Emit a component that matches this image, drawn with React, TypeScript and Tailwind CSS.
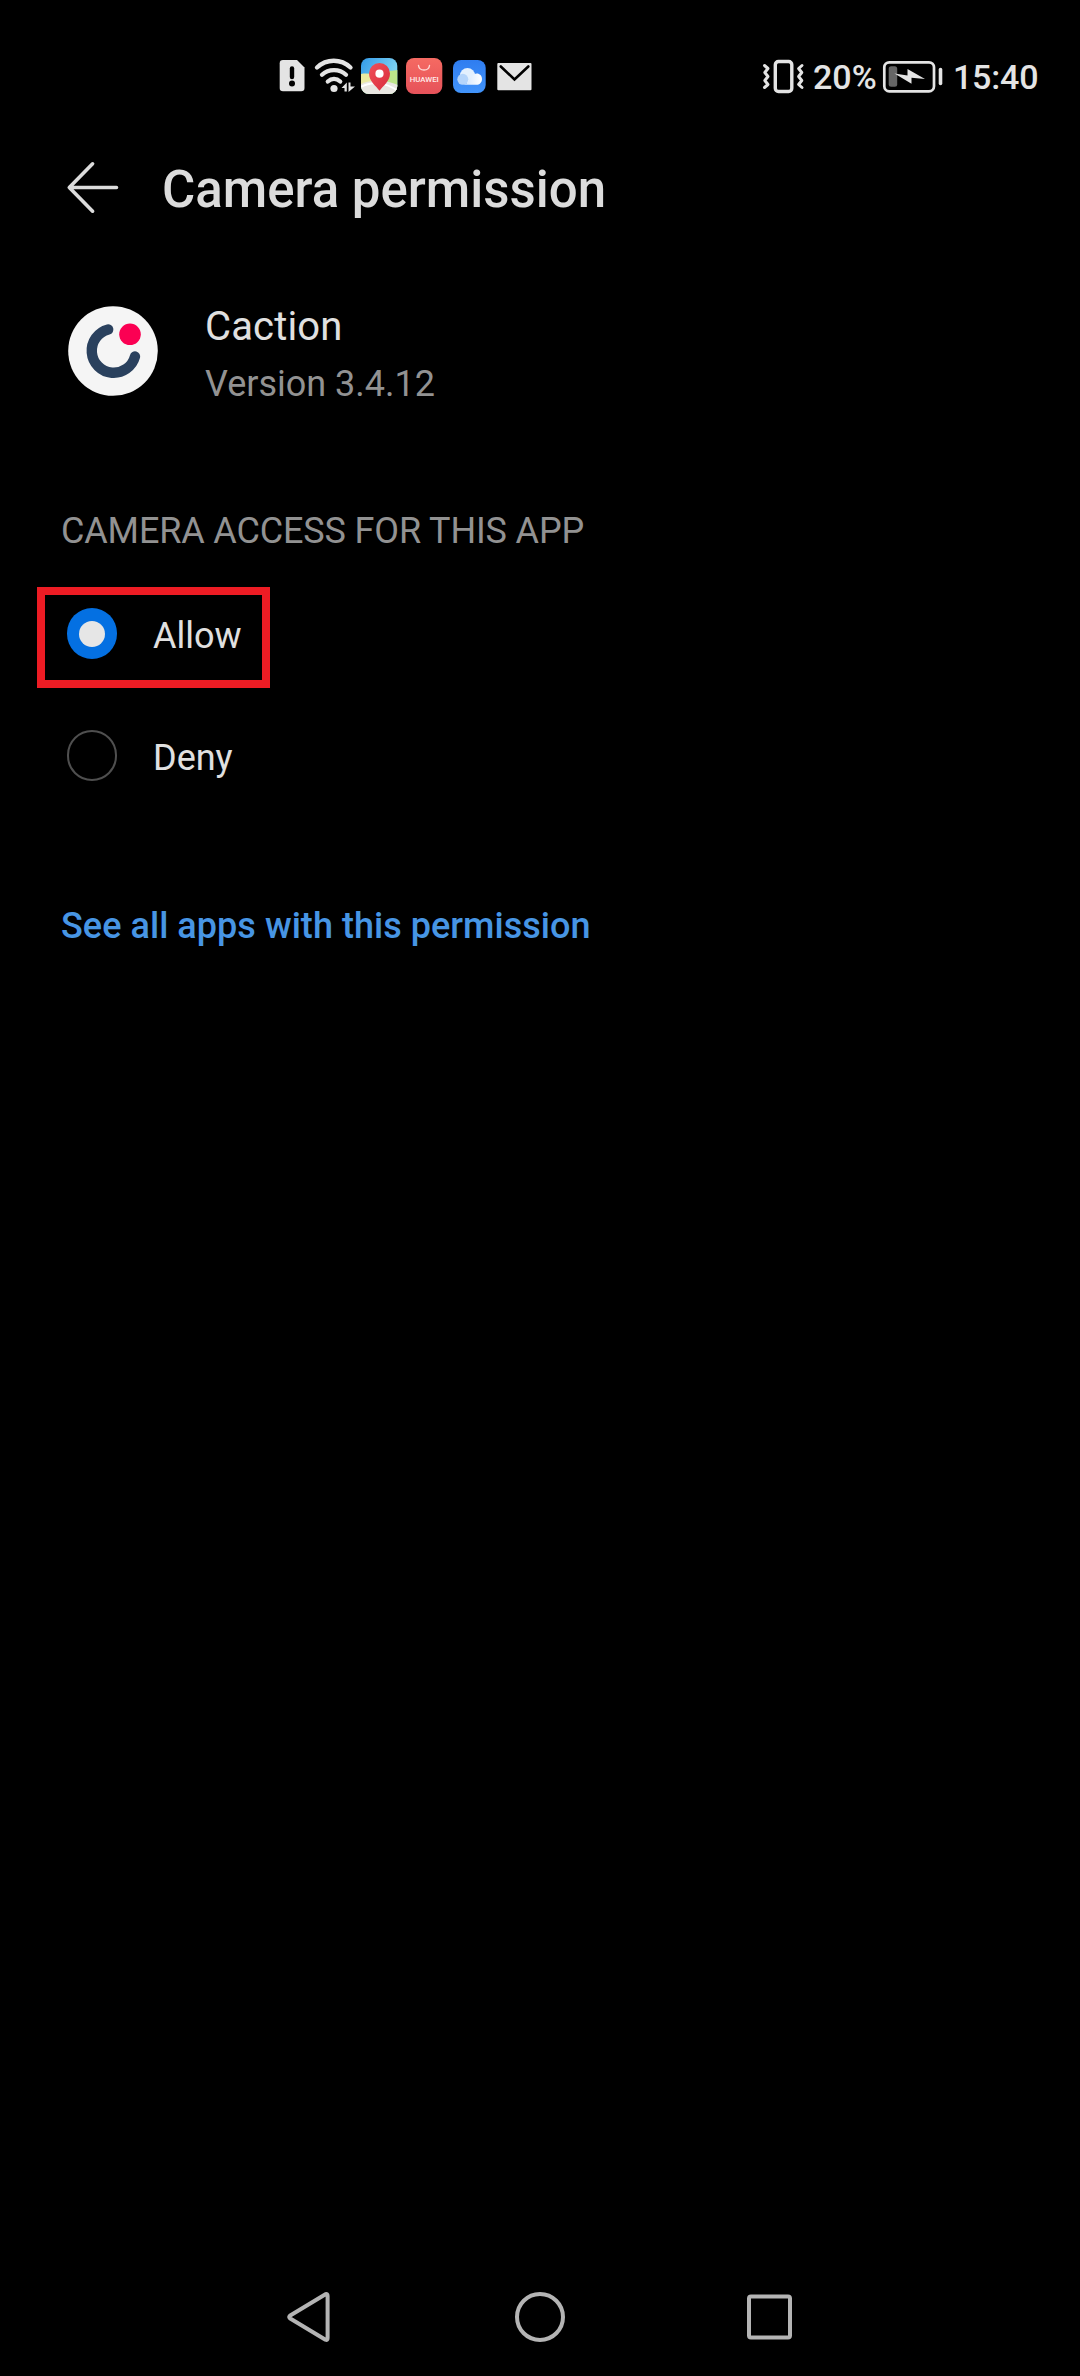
import type { ReactNode } from "react";

const LIGHT = "#e4e4e4";

function SimAlertIcon() {
  return (
    <svg className="ml-[279px] h-[55px] w-[27px]" viewBox="279 50 27 55">
      <path d="M283 60H297L304.500 67.500V88Q304.500 91.300 301.200 91.300H283Q279.700 91.300 279.700 88V63.300Q279.700 60 283 60Z" fill={LIGHT} />
      <path d="M292 68.500V77" stroke="#000" strokeWidth="4.400" strokeLinecap="round" />
      <circle cx="292" cy="83.500" r="3" fill="#000" />
    </svg>
  );
}

function WifiIcon() {
  return (
    <svg className="ml-[6px] h-[55px] w-[46px]" viewBox="312 50 46 55">
      <g fill="none" stroke={LIGHT} strokeWidth="4.300" strokeLinecap="round">
        <path d="M317 67.500C326.500 58.500 341 58.500 350.500 67.500" />
        <path d="M322 74.700C328.500 68.500 339.500 68.500 346 74.700" />
        <path d="M327.800 81.500C331.500 78.200 336.500 78.200 340.200 81.500" />
      </g>
      <circle cx="334" cy="88.500" r="3.600" fill={LIGHT} />
      <path d="M341.500 88L346.800 82.500V91.500H344.500V88Z M348.500 82.500H350.500V86.500H355L348.500 92Z" fill={LIGHT} />
    </svg>
  );
}

function MapIcon() {
  return (
    <svg className="ml-[3px] h-[55px] w-[37px]" viewBox="361 50 37 55">
      <defs>
        <clipPath id="mapClip">
          <rect x="361" y="58" width="36.300" height="36" rx="8" />
        </clipPath>
        <linearGradient id="mapSky" x1="0" y1="0" x2="1" y2="0.600">
          <stop offset="0" stopColor="#329bea" />
          <stop offset="1" stopColor="#8ddcf2" />
        </linearGradient>
        <linearGradient id="mapPin" x1="0" y1="0" x2="1" y2="1">
          <stop offset="0" stopColor="#f0505a" />
          <stop offset="1" stopColor="#d92c3c" />
        </linearGradient>
      </defs>
      <g clipPath="url(#mapClip)">
        <rect x="361" y="58" width="37" height="37" fill="url(#mapSky)" />
        <path d="M361 75C369 73 382 72 398 70V95H361Z" fill="#bde58a" />
        <path d="M361 74C367 73 371 74 375 76V84H361Z" fill="#e9e9a0" />
        <path d="M361 84C371 79 387 80 398 85V95H361Z" fill="#e9e7e2" />
        <path d="M361 87C371 81 385 82 398 91" fill="none" stroke="#fff" strokeWidth="2" />
      </g>
      <path d="M379.500 90.700C376 86 369 81 369 73.500A10.500 10.500 0 0 1 390 73.500C390 81 383 86 379.500 90.700Z" fill="url(#mapPin)" />
      <circle cx="379.500" cy="73.700" r="4.100" fill="#fff" />
    </svg>
  );
}

function AppStoreIcon() {
  return (
    <svg className="ml-[8px] h-[55px] w-[37px]" viewBox="406 50 37 55">
      <defs>
        <linearGradient id="store" x1="0" y1="0" x2="0" y2="1">
          <stop offset="0" stopColor="#f56a62" />
          <stop offset="1" stopColor="#e6525a" />
        </linearGradient>
      </defs>
      <rect x="406" y="58" width="36.300" height="36" rx="8" fill="url(#store)" />
      <path d="M418.500 65.500C419.200 71.500 428.800 71.500 429.500 65.500" fill="none" stroke="#ffd8d4" strokeWidth="1.400" strokeLinecap="round" />
      <text x="409.800" y="81.800" fontSize="6.500" fontWeight="500" fill="#ffeceb" fontFamily="Roboto, sans-serif" textLength="29" lengthAdjust="spacingAndGlyphs">HUAWEI</text>
    </svg>
  );
}

function CloudIcon() {
  return (
    <svg className="ml-[10px] h-[55px] w-[33px]" viewBox="453 50 33 55">
      <defs>
        <linearGradient id="cloudBg" x1="0" y1="0" x2="0" y2="1">
          <stop offset="0" stopColor="#2f7df0" />
          <stop offset="1" stopColor="#4294fb" />
        </linearGradient>
        <linearGradient id="cloudFront" x1="0" y1="0" x2="1" y2="0">
          <stop offset="0" stopColor="#cfe4fd" />
          <stop offset="1" stopColor="#fff" />
        </linearGradient>
      </defs>
      <rect x="453" y="60" width="32.700" height="33" rx="8" fill="url(#cloudBg)" />
      <circle cx="467.500" cy="75.500" r="7.600" fill="#e3f0fe" />
      <circle cx="462.800" cy="79.300" r="5.500" fill="#b5d5fb" />
      <path d="M463.500 84.800C468 84 469 80 471.500 76.500C476 71 482 74 482 79C482 82.500 479.500 84.800 476.500 84.800Z" fill="url(#cloudFront)" />
    </svg>
  );
}

function MailIcon() {
  return (
    <svg className="ml-[11px] h-[55px] w-[35px]" viewBox="497 50 35 55">
      <rect x="497.300" y="63" width="34.200" height="27.300" rx="1" fill={LIGHT} />
      <path d="M500.800 66.500L514.500 79.500L528.300 66.500" fill="none" stroke="#000" strokeWidth="2.600" strokeLinecap="round" />
    </svg>
  );
}

function VibrateIcon() {
  return (
    <svg className="ml-[230px] h-[55px] w-[43px]" viewBox="762 50 43 55">
      <rect x="775.300" y="61.500" width="16.500" height="30" rx="3.200" fill="none" stroke={LIGHT} strokeWidth="3.400" />
      <g fill="none" stroke={LIGHT} strokeWidth="3" strokeLinecap="round" strokeLinejoin="round">
        <path d="M764.500 65.500L768 68.500L764.800 72.500L768 76.500L764.800 80.500L768 84.500L764.500 87.500" />
        <path d="M802 65.500L798.600 68.500L801.800 72.500L798.600 76.500L801.800 80.500L798.600 84.500L802 87.500" />
      </g>
    </svg>
  );
}

function BatteryIcon() {
  return (
    <svg className="h-[55px] w-[62px]" viewBox="882 50 62 55">
      <rect x="884.300" y="62.300" width="49.700" height="29" rx="5" fill="none" stroke={LIGHT} strokeWidth="2.700" />
      <rect x="888.700" y="66.300" width="8.500" height="20.500" rx="2.500" fill="#666" />
      <path d="M940.500 69.500V83.500" stroke={LIGHT} strokeWidth="3.600" strokeLinecap="round" />
      <path d="M894.500 73.500L907.500 75.500V69L925 79L911.500 77.700V83.800Z" fill={LIGHT} />
    </svg>
  );
}

function BackArrow() {
  return (
    <svg className="h-[56px] w-[56px]" viewBox="64 160 56 56" fill="none" stroke="#dcdcdc" strokeWidth="3.600" strokeLinecap="round" strokeLinejoin="round">
      <path d="M92.600 163.800L69.300 187.500L92.600 211.200M69.300 187.500H116.500" />
    </svg>
  );
}

function AppLogo() {
  return (
    <svg className="mt-[4px] h-[90px] w-[90px]" viewBox="68 306 90 90">
      <circle cx="113" cy="351" r="44.800" fill="#f5f5f5" />
      <path d="M108.200 329.500A22 22 0 1 0 135 356.500" fill="none" stroke="#2a415e" strokeWidth="10.400" strokeLinecap="round" />
      <circle cx="130" cy="334.300" r="10.800" fill="#fb0053" />
    </svg>
  );
}

function Radio({ checked = false }: { checked?: boolean }) {
  return checked ? (
    <span className="flex h-[51px] w-[50px] items-center justify-center rounded-full bg-[#0470e2]">
      <span className="size-[26px] rounded-full bg-[#e6e6e6]" />
    </span>
  ) : (
    <span className="h-[51px] w-[50px] rounded-full border-2 border-[#4f4f4f]" />
  );
}

function Label({ children }: { children: ReactNode }) {
  return <span className="text-[36px] leading-[44px] text-[#e0e0e0]">{children}</span>;
}

export default function App() {
  return (
    <div className="flex h-[2376px] w-[1080px] flex-col bg-black font-['Roboto',sans-serif] whitespace-nowrap">
      <div className="mt-[50px] flex h-[55px] shrink-0 items-start">
        <SimAlertIcon />
        <WifiIcon />
        <MapIcon />
        <AppStoreIcon />
        <CloudIcon />
        <MailIcon />
        <VibrateIcon />
        <span className="mt-[5px] ml-[8px] w-[69px] text-[34px] leading-[44px] font-medium text-[#e4e4e4]">20%</span>
        <BatteryIcon />
        <span className="mt-[5px] ml-[9px] text-[34px] leading-[44px] font-medium tracking-[-0.2px] text-[#e4e4e4]">15:40</span>
      </div>

      <header className="mt-[55px] flex h-[60px] shrink-0 pl-[64px]">
        <BackArrow />
        <h1 className="ml-[42px] text-[51px] leading-[60px] font-medium text-[#dcdcdc]">Camera permission</h1>
      </header>

      <section className="mt-[82px] flex h-[104px] shrink-0 pl-[68px]">
        <AppLogo />
        <div className="ml-[47px] flex flex-col">
          <span className="mt-px text-[40px] leading-[48px] tracking-[0.15px] text-[#e0e0e0]">Caction</span>
          <span className="mt-[11px] text-[36px] leading-[44px] text-[#929292]">Version 3.4.12</span>
        </div>
      </section>

      <h2 className="mt-[103px] pl-[61px] text-[36px] leading-[44px] tracking-[-0.15px] text-[#929292]">CAMERA ACCESS FOR THIS APP</h2>

      <div className="mt-[34px] ml-[37px] flex h-[101px] w-[233px] shrink-0 gap-[36px] border-8 border-[#ed1c24] pt-[13px] pl-[22px]">
        <Radio checked />
        <div className="mt-[6px]">
          <Label>Allow</Label>
        </div>
      </div>
      <div className="mt-[42px] ml-[67px] flex h-[51px] shrink-0 gap-[36px]">
        <Radio />
        <div className="mt-[6px]">
          <Label>Deny</Label>
        </div>
      </div>

      <a className="mt-[123px] pl-[61px] text-[36px] leading-[44px] font-medium tracking-[0.04px] text-[#4795e4]">See all apps with this permission</a>

      <nav className="mt-auto mb-[31px] flex h-[56px] shrink-0 pl-[284px]">
        <svg className="h-[56px] w-[512px]" viewBox="284 2289 512 56" fill="none" stroke="#b4b4b4" strokeWidth="4" strokeLinejoin="round">
          <path d="M289.800 2315.800L325.500 2294.200Q327.600 2293.500 327.600 2296V2338Q327.600 2340.500 325.500 2339.700L289.800 2318.200Q288.600 2317 289.800 2315.800Z" />
          <circle cx="540" cy="2317" r="23" />
          <rect x="749" y="2296.500" width="41" height="41" rx="2" />
        </svg>
      </nav>
    </div>
  );
}
